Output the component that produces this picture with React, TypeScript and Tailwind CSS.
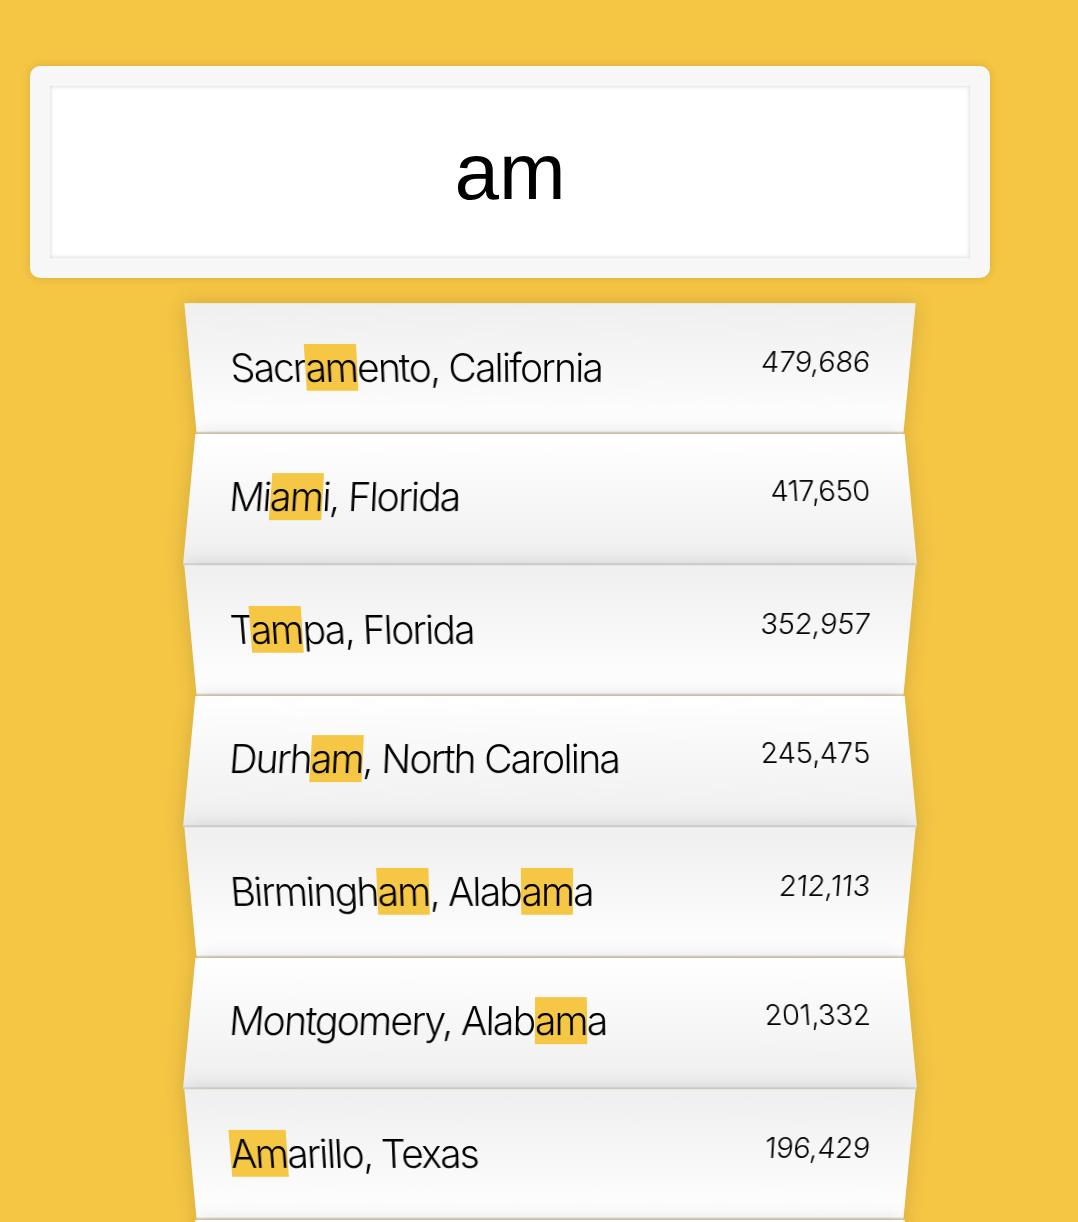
import React from "react"

interface City {
  name: string
  population: string
}

const query = "am"

const cities: City[] = [
  { name: "Sacramento, California", population: "479,686" },
  { name: "Miami, Florida", population: "417,650" },
  { name: "Tampa, Florida", population: "352,957" },
  { name: "Durham, North Carolina", population: "245,475" },
  { name: "Birmingham, Alabama", population: "212,113" },
  { name: "Montgomery, Alabama", population: "201,332" },
  { name: "Amarillo, Texas", population: "196,429" },
  { name: "Rancho Cucamonga, California", population: "171,386" },
]

function Highlighted({ text }: { text: string }) {
  const parts = text.split(new RegExp(`(${query})`, "gi"))
  return (
    <>
      {parts.map((part, i) =>
        part.toLowerCase() === query ? (
          <span key={i} className="bg-[#F6C744]">
            {part}
          </span>
        ) : (
          <React.Fragment key={i}>{part}</React.Fragment>
        )
      )}
    </>
  )
}

export default function App() {
  return (
    <div className="min-h-screen bg-[#F5C644] pt-[66px] pb-16 overflow-hidden">
      <form className="ml-[30px] w-[960px]" onSubmit={(e) => e.preventDefault()}>
        <input
          className="block w-full h-[212px] rounded-[10px] border-[20px] border-[#F7F7F7] bg-white text-center text-[80px] text-black outline-none shadow-[0_0_10px_rgba(0,0,0,0.12),inset_0_0_4px_rgba(0,0,0,0.19)] font-['Liberation_Sans',Arial,sans-serif]"
          value={query}
          readOnly
        />
      </form>

      <ul className="ml-[190px] mt-[20px] w-[720px] font-['Inter',sans-serif] font-light text-black">
        {cities.map((city, i) => (
          <li
            key={city.name}
            className={
              i % 2 === 0
                ? "flex justify-between h-[131px] px-10 pt-10 border-b-2 border-[#D8D8D8] shadow-[0_0_20px_rgba(0,0,0,0.14)] bg-gradient-to-b from-[#EFEFEF] to-white [transform:perspective(200px)_rotateX(-3deg)_translateY(6px)]"
                : "flex justify-between h-[131px] px-10 pt-10 border-b-2 border-[#D8D8D8] shadow-[0_0_20px_rgba(0,0,0,0.14)] bg-gradient-to-b from-white to-[#EFEFEF] [transform:perspective(200px)_rotateX(3deg)_translateY(4px)_scale(1.001)]"
            }
          >
            <span className="text-[39px] leading-[48px] tracking-[-0.045em]">
              <Highlighted text={city.name} />
            </span>
            <span className="text-[29px] leading-[36px] tracking-[-0.01em]">
              {city.population}
            </span>
          </li>
        ))}
      </ul>
    </div>
  )
}
